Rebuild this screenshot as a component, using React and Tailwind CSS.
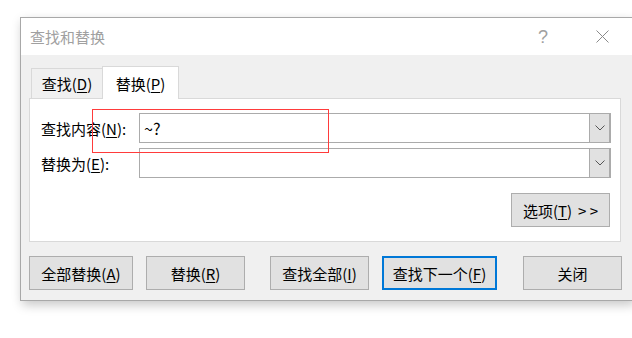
import React from "react";

const F = { fontFamily: '"Noto Sans CJK SC", "Noto Sans", sans-serif' };

function U({ children }) {
  return <span className="underline underline-offset-2 decoration-1">{children}</span>;
}

function Chevron() {
  return (
    <svg width="10" height="6" viewBox="0 0 10 6" className="block">
      <path d="M0.5 0.5 L5 5 L9.5 0.5" fill="none" stroke="#555" strokeWidth="1" />
    </svg>
  );
}

function Combo({ value }) {
  return (
    <div className="flex h-[30px] w-[472px] border border-[#ababab] bg-white">
      <div className="flex flex-1 items-center pl-[4px] text-[16px] leading-none text-black">{value}</div>
      <div className="flex w-[21px] items-center justify-center border-l border-[#ababab] bg-[#e1e1e1] border-r border-r-[#ababab]">
        <Chevron />
      </div>
    </div>
  );
}

function Btn({ children, w, primary }) {
  return (
    <div
      className={
        "flex h-[34px] items-center justify-center bg-[#e1e1e1] text-[15px] leading-none text-black " +
        (primary ? "border-2 border-[#0078d7]" : "border border-[#adadad]")
      }
      style={{ width: w }}
    >
      {children}
    </div>
  );
}

export default function App() {
  return (
    <div className="relative h-[338px] w-[632px] overflow-hidden bg-white pl-[20px] pt-[17px]" style={F}>
      <div className="flex h-[284px] w-[613px] flex-col border border-[#a8a8a8] bg-[#f0f0f0] shadow-[2px_4px_10px_rgba(0,0,0,0.22)]">
        {/* Title bar */}
        <div className="flex h-[37px] items-center bg-white">
          <div className="pl-[9px] text-[15px] leading-none text-[#a0a0a0]">查找和替换</div>
          <div
            className="ml-auto mr-[48px] text-[18px] leading-none text-[#a0a0a0]"
            style={{ fontFamily: '"Liberation Sans", sans-serif' }}
          >
            ?
          </div>
          <div className="mr-[23px]">
            <svg width="13" height="13" viewBox="0 0 13 13" className="block">
              <path d="M0.5 0.5 L12.5 12.5 M12.5 0.5 L0.5 12.5" stroke="#8a8a8a" strokeWidth="1" />
            </svg>
          </div>
        </div>

        {/* Body */}
        <div className="flex flex-1 flex-col px-[8px]">
          {/* Tabs */}
          <div className="flex h-[43px] items-end pl-[2px]">
            <div className="flex h-[30px] w-[71px] items-center justify-center border-l border-t border-[#d9d9d9] text-[15px] leading-none text-black">
              查找(<U>D</U>)
            </div>
            <div className="relative z-10 -mb-px flex h-[33px] w-[77px] items-center justify-center border-l border-r border-t border-[#d9d9d9] bg-white text-[15px] leading-none text-black">
              替换(<U>P</U>)
            </div>
          </div>

          {/* Panel */}
          <div className="relative flex h-[144px] w-[592px] flex-col border border-[#d9d9d9] bg-white pl-[11px] pt-[14px]">
            <div className="flex items-center">
              <div className="w-[98px] text-[15px] leading-none text-black">
                查找内容(<U>N</U>):
              </div>
              <Combo value="~?" />
            </div>
            <div className="mt-[5px] flex items-center">
              <div className="w-[98px] text-[15px] leading-none text-black">
                替换为(<U>E</U>):
              </div>
              <Combo value="" />
            </div>
            <div className="mt-[15px] flex justify-end pr-[10px]">
              <Btn w="99px">
                选项(<U>T</U>)<span className="ml-[6px]">&gt; &gt;</span>
              </Btn>
            </div>
            {/* red highlight */}
            <div className="pointer-events-none absolute left-[62px] top-[10px] h-[44px] w-[237px] border border-[#ff3b3b]" />
          </div>

          {/* Bottom buttons */}
          <div className="mt-[14px] flex">
            <Btn w="104px">全部替换(<U>A</U>)</Btn>
            <div className="ml-[13px]">
              <Btn w="99px">替换(<U>R</U>)</Btn>
            </div>
            <div className="ml-[25px]">
              <Btn w="99px">查找全部(<U>I</U>)</Btn>
            </div>
            <div className="ml-[13px]">
              <Btn w="115px" primary>查找下一个(<U>F</U>)</Btn>
            </div>
            <div className="ml-[26px]">
              <Btn w="99px">关闭</Btn>
            </div>
          </div>
        </div>
      </div>
    </div>
  );
}
